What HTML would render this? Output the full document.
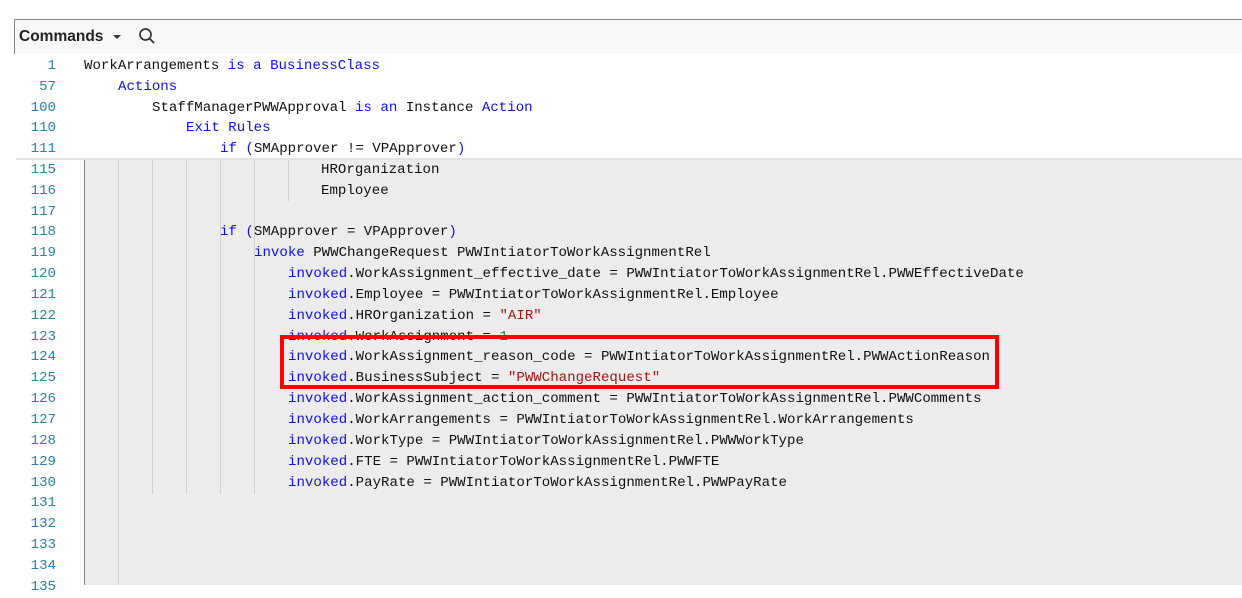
<!DOCTYPE html>
<html><head><meta charset="utf-8"><style>
html,body{margin:0;padding:0;width:1242px;height:585px;overflow:hidden;background:#fff;font-family:"Liberation Sans",sans-serif}
.tb{position:absolute;left:14px;top:19px;width:1228px;height:35px;background:#f7f7f7;border-top:1px solid #888;border-left:1px solid #888;box-sizing:border-box}
.tb .c{position:absolute;left:4px;top:8px;font-size:15.5px;color:#222;font-weight:bold}
.gray{position:absolute;left:84px;top:159px;width:1158px;height:426px;background:#ececec}
.shadow{position:absolute;left:16px;top:158px;width:1226px;height:2px;background:#e2e2e2}
.vl{position:absolute;width:1px;background:#d0d0d0}
.ln{position:absolute;left:14px;width:42px;text-align:right;font:14.1px "Liberation Mono",monospace;color:#2b7fa8;line-height:20.87px;margin-top:1px}
.cd{position:absolute;font:14.1px "Liberation Mono",monospace;color:#111;line-height:20.87px;white-space:pre;margin-top:1px}
.k{color:#1010ee}.s{color:#a31515}.n{color:#098658}
.box{position:absolute;left:280px;top:335px;width:719px;height:54px;border:4px solid #f00;box-sizing:border-box}
</style></head><body>
<div class="tb"><span class="c">Commands</span>
<svg style="position:absolute;left:98px;top:15px" width="9" height="6"><path d="M0 0L8 0L4 4Z" fill="#333"/></svg>
<svg style="position:absolute;left:123px;top:7px" width="18" height="18"><circle cx="7.5" cy="7.5" r="5.5" fill="none" stroke="#333" stroke-width="1.7"/><path d="M11.5 11.5L16 16" stroke="#333" stroke-width="1.8"/></svg>
</div>
<div class="gray"></div>
<div class="vl" style="left:84px;top:159px;height:426px;background:#888"></div>
<div class="vl" style="left:118px;top:159px;height:426px"></div>
<div class="vl" style="left:152px;top:159px;height:335px"></div>
<div class="vl" style="left:186px;top:159px;height:335px"></div>
<div class="vl" style="left:220px;top:159px;height:335px"></div>
<div class="vl" style="left:254px;top:159px;height:335px"></div>
<div class="vl" style="left:288px;top:159px;height:42px"></div>
<div class="shadow"></div>
<div class="ln" style="top:55px">1</div><div class="cd" style="left:84px;top:55px">WorkArrangements <span class="k">is a BusinessClass</span></div>
<div class="ln" style="top:76px">57</div><div class="cd" style="left:118px;top:76px"><span class="k">Actions</span></div>
<div class="ln" style="top:97px">100</div><div class="cd" style="left:152px;top:97px">StaffManagerPWWApproval <span class="k">is an</span> Instance <span class="k">Action</span></div>
<div class="ln" style="top:117px">110</div><div class="cd" style="left:186px;top:117px"><span class="k">Exit Rules</span></div>
<div class="ln" style="top:138px">111</div><div class="cd" style="left:220px;top:138px"><span class="k">if (</span>SMApprover != VPApprover<span class="k">)</span></div>
<div class="ln" style="top:159px">115</div><div class="cd" style="left:321px;top:159px">HROrganization</div>
<div class="ln" style="top:180px">116</div><div class="cd" style="left:321px;top:180px">Employee</div>
<div class="ln" style="top:201px">117</div>
<div class="ln" style="top:221px">118</div><div class="cd" style="left:220px;top:221px"><span class="k">if (</span>SMApprover = VPApprover<span class="k">)</span></div>
<div class="ln" style="top:242px">119</div><div class="cd" style="left:254px;top:242px"><span class="k">invoke</span> PWWChangeRequest PWWIntiatorToWorkAssignmentRel</div>
<div class="ln" style="top:263px">120</div><div class="cd" style="left:288px;top:263px"><span class="k">invoked</span>.WorkAssignment_effective_date = PWWIntiatorToWorkAssignmentRel.PWWEffectiveDate</div>
<div class="ln" style="top:284px">121</div><div class="cd" style="left:288px;top:284px"><span class="k">invoked</span>.Employee = PWWIntiatorToWorkAssignmentRel.Employee</div>
<div class="ln" style="top:305px">122</div><div class="cd" style="left:288px;top:305px"><span class="k">invoked</span>.HROrganization = <span class="s">"AIR"</span></div>
<div class="ln" style="top:326px">123</div><div class="cd" style="left:288px;top:326px"><span class="k">invoked</span>.WorkAssignment = <span class="n">1</span></div>
<div class="ln" style="top:346px">124</div><div class="cd" style="left:288px;top:346px"><span class="k">invoked</span>.WorkAssignment_reason_code = PWWIntiatorToWorkAssignmentRel.PWWActionReason</div>
<div class="ln" style="top:367px">125</div><div class="cd" style="left:288px;top:367px"><span class="k">invoked</span>.BusinessSubject = <span class="s">"PWWChangeRequest"</span></div>
<div class="ln" style="top:388px">126</div><div class="cd" style="left:288px;top:388px"><span class="k">invoked</span>.WorkAssignment_action_comment = PWWIntiatorToWorkAssignmentRel.PWWComments</div>
<div class="ln" style="top:409px">127</div><div class="cd" style="left:288px;top:409px"><span class="k">invoked</span>.WorkArrangements = PWWIntiatorToWorkAssignmentRel.WorkArrangements</div>
<div class="ln" style="top:430px">128</div><div class="cd" style="left:288px;top:430px"><span class="k">invoked</span>.WorkType = PWWIntiatorToWorkAssignmentRel.PWWWorkType</div>
<div class="ln" style="top:451px">129</div><div class="cd" style="left:288px;top:451px"><span class="k">invoked</span>.FTE = PWWIntiatorToWorkAssignmentRel.PWWFTE</div>
<div class="ln" style="top:472px">130</div><div class="cd" style="left:288px;top:472px"><span class="k">invoked</span>.PayRate = PWWIntiatorToWorkAssignmentRel.PWWPayRate</div>
<div class="ln" style="top:492px">131</div>
<div class="ln" style="top:513px">132</div>
<div class="ln" style="top:534px">133</div>
<div class="ln" style="top:555px">134</div>
<div class="ln" style="top:576px">135</div>
<div class="box"></div>
</body></html>
